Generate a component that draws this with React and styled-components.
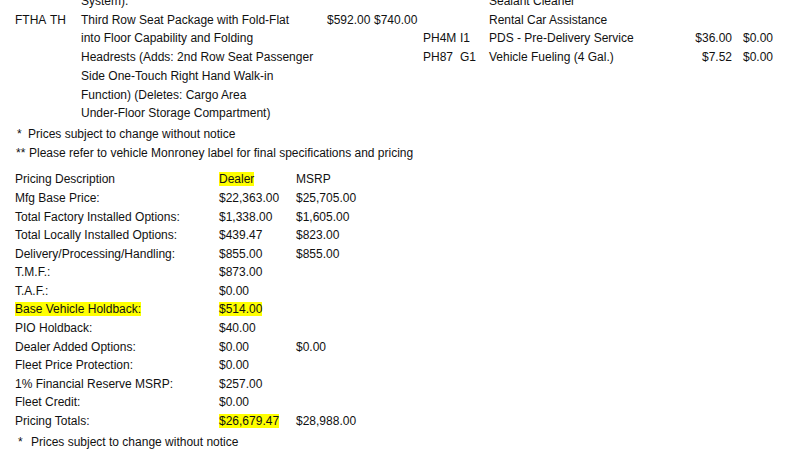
import React from 'react';
import styled, { createGlobalStyle } from 'styled-components';

const GlobalStyle = createGlobalStyle`
  html, body {
    margin: 0;
    padding: 0;
    background: #ffffff;
  }
  body {
    font-family: "Liberation Sans", Arial, sans-serif;
    font-size: 12px;
    color: #111111;
  }
`;

const Page = styled.div`
  padding-left: 15px;
  margin-top: -8px;
  line-height: 18.7px;
`;

const OptionsRow = styled.div`
  display: flex;
  align-items: flex-start;
  gap: 3px;
`;

const OptionsTable = styled.table`
  border-collapse: collapse;
  table-layout: fixed;

  td {
    padding: 0;
    vertical-align: top;
    white-space: nowrap;
  }
`;

const Cell = styled.td`
  width: ${(p) => p.w}px;
  text-align: ${(p) => (p.right ? 'right' : 'left')};
  padding-left: ${(p) => p.pad || 0}px !important;
`;

const Note = styled.div`
  display: flex;
  padding-left: ${(p) => p.indent || 0}px;
  margin-top: ${(p) => p.top || 0}px;
`;

const Star = styled.span`
  width: ${(p) => p.width}px;
`;

const PricingTable = styled.table`
  border-collapse: collapse;
  margin-top: 8px;
  line-height: 18.6px;

  td {
    padding: 0;
    vertical-align: top;
  }
`;

const LabelCell = styled.td`
  width: 204px;
`;

const DealerCell = styled.td`
  width: 77px;
`;

const Mark = styled.span`
  background: ${(p) => (p.on ? '#ffff00' : 'transparent')};
`;

const leftOptions = [
  { code: '', sub: '', desc: ['System).'], dealer: '', msrp: '' },
  {
    code: 'FTHA',
    sub: 'TH',
    desc: [
      'Third Row Seat Package with Fold-Flat',
      'into Floor Capability and Folding',
      'Headrests (Adds: 2nd Row Seat Passenger',
      'Side One-Touch Right Hand Walk-in',
      'Function) (Deletes: Cargo Area',
      'Under-Floor Storage Compartment)',
    ],
    dealer: '$592.00',
    msrp: '$740.00',
  },
];

const rightOptions = [
  { code: '', sub: '', desc: ['Sealant Cleaner'], dealer: '', msrp: '' },
  { code: '', sub: '', desc: ['Rental Car Assistance'], dealer: '', msrp: '' },
  { code: 'PH4M', sub: 'I1', desc: ['PDS - Pre-Delivery Service'], dealer: '$36.00', msrp: '$0.00' },
  { code: 'PH87', sub: 'G1', desc: ['Vehicle Fueling (4 Gal.)'], dealer: '$7.52', msrp: '$0.00' },
];

const pricing = [
  { label: 'Pricing Description', dealer: 'Dealer', msrp: 'MSRP', markDealer: true },
  { label: 'Mfg Base Price:', dealer: '$22,363.00', msrp: '$25,705.00' },
  { label: 'Total Factory Installed Options:', dealer: '$1,338.00', msrp: '$1,605.00' },
  { label: 'Total Locally Installed Options:', dealer: '$439.47', msrp: '$823.00' },
  { label: 'Delivery/Processing/Handling:', dealer: '$855.00', msrp: '$855.00' },
  { label: 'T.M.F.:', dealer: '$873.00', msrp: '' },
  { label: 'T.A.F.:', dealer: '$0.00', msrp: '' },
  { label: 'Base Vehicle Holdback:', dealer: '$514.00', msrp: '', markLabel: true, markDealer: true },
  { label: 'PIO Holdback:', dealer: '$40.00', msrp: '' },
  { label: 'Dealer Added Options:', dealer: '$0.00', msrp: '$0.00' },
  { label: 'Fleet Price Protection:', dealer: '$0.00', msrp: '' },
  { label: '1% Financial Reserve MSRP:', dealer: '$257.00', msrp: '' },
  { label: 'Fleet Credit:', dealer: '$0.00', msrp: '' },
  { label: 'Pricing Totals:', dealer: '$26,679.47', msrp: '$28,988.00', markDealer: true },
];

// cols: [code, sub, desc, dealer, msrp], each { w, right, pad }
const OptionList = ({ items, cols }) => (
  <OptionsTable>
    <tbody>
      {items.map((o, i) => (
        <tr key={i}>
          <Cell {...cols[0]}>{o.code}</Cell>
          <Cell {...cols[1]}>{o.sub}</Cell>
          <Cell {...cols[2]}>
            {o.desc.map((line, j) => (
              <div key={j}>{line}</div>
            ))}
          </Cell>
          <Cell {...cols[3]}>{o.dealer}</Cell>
          <Cell {...cols[4]}>{o.msrp}</Cell>
        </tr>
      ))}
    </tbody>
  </OptionsTable>
);

const leftCols = [{ w: 35 }, { w: 31 }, { w: 246 }, { w: 47 }, { w: 46 }];
const rightCols = [{ w: 37 }, { w: 29 }, { w: 199 }, { w: 44, right: true }, { w: 37, pad: 11 }];

const App = () => (
  <>
    <GlobalStyle />
    <Page>
      <OptionsRow>
        <OptionList items={leftOptions} cols={leftCols} />
        <OptionList items={rightOptions} cols={rightCols} />
      </OptionsRow>
      <Note indent={2} top={2}>
        <Star width={11}>*</Star>
        Prices subject to change without notice
      </Note>
      <Note indent={1}>
        <Star width={13}>**</Star>
        Please refer to vehicle Monroney label for final specifications and pricing
      </Note>
      <PricingTable>
        <tbody>
          {pricing.map((r) => (
            <tr key={r.label}>
              <LabelCell>
                <Mark on={r.markLabel}>{r.label}</Mark>
              </LabelCell>
              <DealerCell>
                <Mark on={r.markDealer}>{r.dealer}</Mark>
              </DealerCell>
              <td>{r.msrp}</td>
            </tr>
          ))}
        </tbody>
      </PricingTable>
      <Note indent={3} top={2}>
        <Star width={13}>*</Star>
        Prices subject to change without notice
      </Note>
    </Page>
  </>
);

export default App;
